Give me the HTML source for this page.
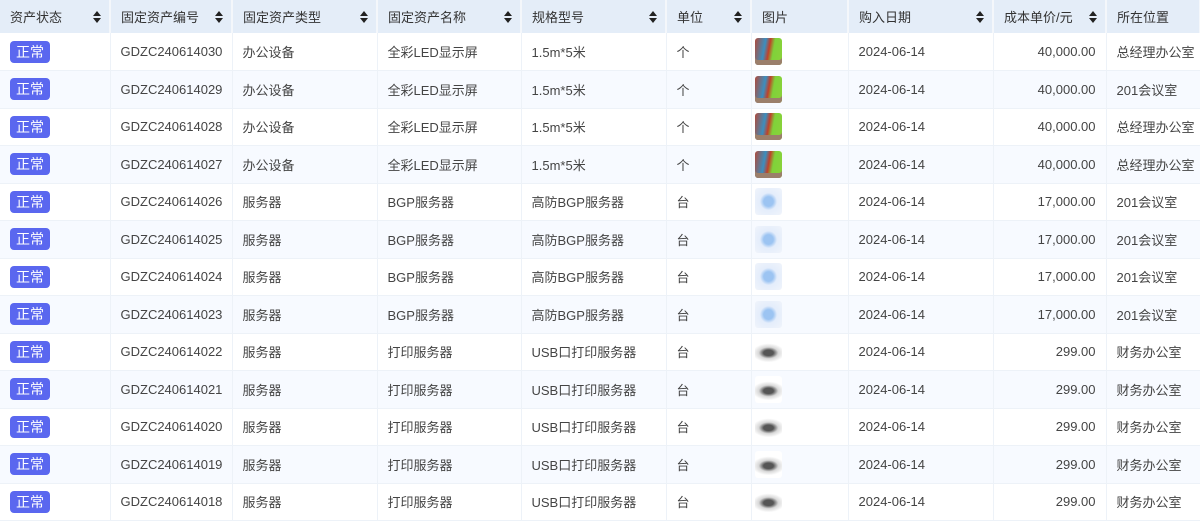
<!DOCTYPE html>
<html><head><meta charset="utf-8"><style>
body{margin:0;width:1200px;height:513px;overflow:hidden;background:#fff;font-family:"Liberation Sans","Noto Sans CJK SC",sans-serif;font-size:13px;color:#444}
table{border-collapse:collapse;table-layout:fixed;width:1200px}
th{background:#e4edf8;height:33px;font-weight:normal;text-align:left;padding:0 10px;color:#333;border-right:2px solid #f4f7fb;position:relative}
th .s{position:absolute;right:8px;top:11px;width:8px;height:12px}
td{height:37.5px;padding:0 10px;border-right:1px solid #edf2f8;border-bottom:1px solid #edf2f8;box-sizing:border-box;white-space:nowrap}
td.p{padding:0 3px}
tr:nth-child(odd) td{background:#f7faff}
.b{display:inline-block;background:#5a67ef;color:#fff;border-radius:4px;padding:0 6px;height:22px;line-height:22px;font-size:14px}
.r{text-align:right}
.im{width:27px;height:27px;border-radius:3px;display:block}
.i1{background:linear-gradient(100deg,#b04a3a 0,#3a8fc0 35%,#c0402a 50%,#7fd23a 65%,#8bd23a);box-shadow:inset 0 -5px 0 #9b7f6b}
.i2{background:radial-gradient(circle at 50% 50%,#9cc4f2 0 25%,#e4edfb 45%,#f0f4fb)}
.i3{background:radial-gradient(ellipse 60% 35% at 50% 55%,#555 0 30%,#d8d8d8 60%,#fff 100%)}
</style></head><body>
<table>
<colgroup><col style="width:110px"><col style="width:122px"><col style="width:145px"><col style="width:144px"><col style="width:145px"><col style="width:85px"><col style="width:97px"><col style="width:145px"><col style="width:113px"><col style="width:94px"></colgroup>
<tr><th>资产状态<svg class="s"><path d="M0 5L4 0L8 5Z M0 7L4 12L8 7Z" fill="#222"/></svg></th><th>固定资产编号<svg class="s"><path d="M0 5L4 0L8 5Z M0 7L4 12L8 7Z" fill="#222"/></svg></th><th>固定资产类型<svg class="s"><path d="M0 5L4 0L8 5Z M0 7L4 12L8 7Z" fill="#222"/></svg></th><th>固定资产名称<svg class="s"><path d="M0 5L4 0L8 5Z M0 7L4 12L8 7Z" fill="#222"/></svg></th><th>规格型号<svg class="s"><path d="M0 5L4 0L8 5Z M0 7L4 12L8 7Z" fill="#222"/></svg></th><th>单位<svg class="s"><path d="M0 5L4 0L8 5Z M0 7L4 12L8 7Z" fill="#222"/></svg></th><th>图片</th><th>购入日期<svg class="s"><path d="M0 5L4 0L8 5Z M0 7L4 12L8 7Z" fill="#222"/></svg></th><th>成本单价/元<svg class="s"><path d="M0 5L4 0L8 5Z M0 7L4 12L8 7Z" fill="#222"/></svg></th><th>所在位置</th></tr>
<tr><td><span class="b">正常</span></td><td>GDZC240614030</td><td>办公设备</td><td>全彩LED显示屏</td><td>1.5m*5米</td><td>个</td><td class="p"><span class="im i1"></span></td><td>2024-06-14</td><td class="r">40,000.00</td><td>总经理办公室</td></tr>
<tr><td><span class="b">正常</span></td><td>GDZC240614029</td><td>办公设备</td><td>全彩LED显示屏</td><td>1.5m*5米</td><td>个</td><td class="p"><span class="im i1"></span></td><td>2024-06-14</td><td class="r">40,000.00</td><td>201会议室</td></tr>
<tr><td><span class="b">正常</span></td><td>GDZC240614028</td><td>办公设备</td><td>全彩LED显示屏</td><td>1.5m*5米</td><td>个</td><td class="p"><span class="im i1"></span></td><td>2024-06-14</td><td class="r">40,000.00</td><td>总经理办公室</td></tr>
<tr><td><span class="b">正常</span></td><td>GDZC240614027</td><td>办公设备</td><td>全彩LED显示屏</td><td>1.5m*5米</td><td>个</td><td class="p"><span class="im i1"></span></td><td>2024-06-14</td><td class="r">40,000.00</td><td>总经理办公室</td></tr>
<tr><td><span class="b">正常</span></td><td>GDZC240614026</td><td>服务器</td><td>BGP服务器</td><td>高防BGP服务器</td><td>台</td><td class="p"><span class="im i2"></span></td><td>2024-06-14</td><td class="r">17,000.00</td><td>201会议室</td></tr>
<tr><td><span class="b">正常</span></td><td>GDZC240614025</td><td>服务器</td><td>BGP服务器</td><td>高防BGP服务器</td><td>台</td><td class="p"><span class="im i2"></span></td><td>2024-06-14</td><td class="r">17,000.00</td><td>201会议室</td></tr>
<tr><td><span class="b">正常</span></td><td>GDZC240614024</td><td>服务器</td><td>BGP服务器</td><td>高防BGP服务器</td><td>台</td><td class="p"><span class="im i2"></span></td><td>2024-06-14</td><td class="r">17,000.00</td><td>201会议室</td></tr>
<tr><td><span class="b">正常</span></td><td>GDZC240614023</td><td>服务器</td><td>BGP服务器</td><td>高防BGP服务器</td><td>台</td><td class="p"><span class="im i2"></span></td><td>2024-06-14</td><td class="r">17,000.00</td><td>201会议室</td></tr>
<tr><td><span class="b">正常</span></td><td>GDZC240614022</td><td>服务器</td><td>打印服务器</td><td>USB口打印服务器</td><td>台</td><td class="p"><span class="im i3"></span></td><td>2024-06-14</td><td class="r">299.00</td><td>财务办公室</td></tr>
<tr><td><span class="b">正常</span></td><td>GDZC240614021</td><td>服务器</td><td>打印服务器</td><td>USB口打印服务器</td><td>台</td><td class="p"><span class="im i3"></span></td><td>2024-06-14</td><td class="r">299.00</td><td>财务办公室</td></tr>
<tr><td><span class="b">正常</span></td><td>GDZC240614020</td><td>服务器</td><td>打印服务器</td><td>USB口打印服务器</td><td>台</td><td class="p"><span class="im i3"></span></td><td>2024-06-14</td><td class="r">299.00</td><td>财务办公室</td></tr>
<tr><td><span class="b">正常</span></td><td>GDZC240614019</td><td>服务器</td><td>打印服务器</td><td>USB口打印服务器</td><td>台</td><td class="p"><span class="im i3"></span></td><td>2024-06-14</td><td class="r">299.00</td><td>财务办公室</td></tr>
<tr><td><span class="b">正常</span></td><td>GDZC240614018</td><td>服务器</td><td>打印服务器</td><td>USB口打印服务器</td><td>台</td><td class="p"><span class="im i3"></span></td><td>2024-06-14</td><td class="r">299.00</td><td>财务办公室</td></tr>
</table>
</body></html>
